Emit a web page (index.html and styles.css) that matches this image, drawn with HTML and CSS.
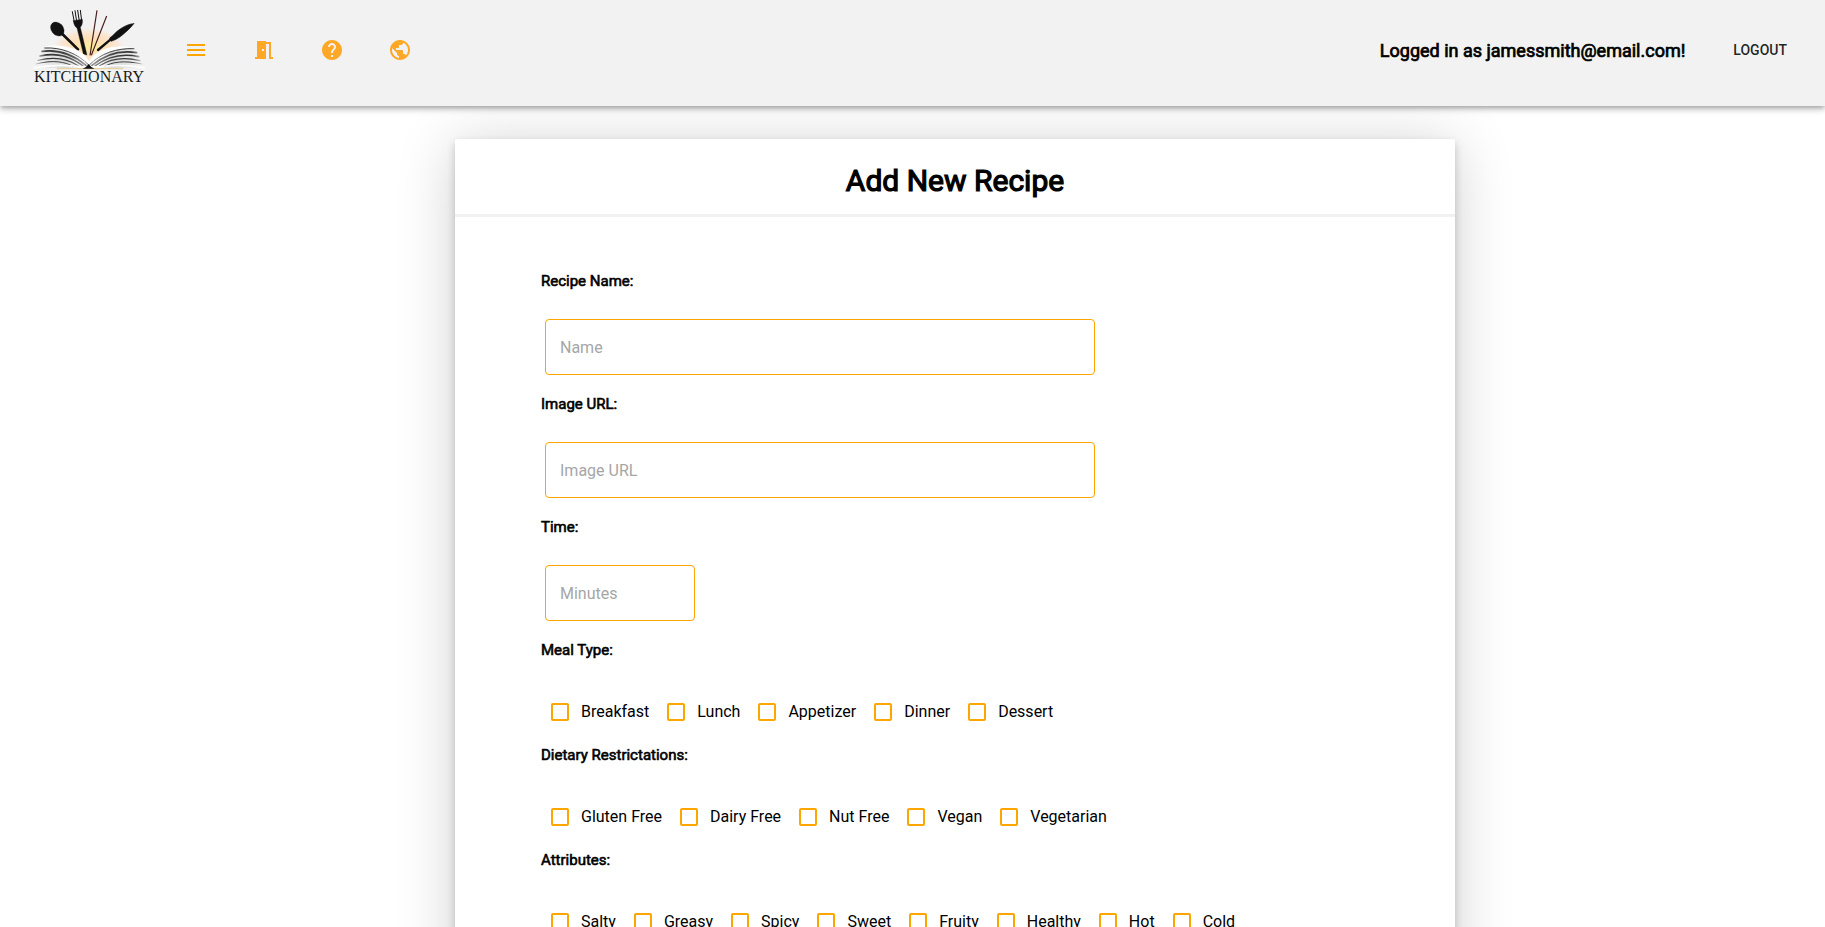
FILE: index.html
```html
<!DOCTYPE html>
<html lang="en">
<head>
<meta charset="utf-8">
<meta name="viewport" content="width=device-width, initial-scale=1">
<title>Kitchionary - Add New Recipe</title>
<link rel="stylesheet" href="styles.css">
</head>
<body>
<header class="topbar">
  <a class="logo" href="#" aria-label="Kitchionary home">
    <svg viewBox="0 0 420 300" width="140" height="100">
      <defs>
        <radialGradient id="glow">
          <stop offset="0" stop-color="#ffee9a"/>
          <stop offset="0.45" stop-color="#fde0b8"/>
          <stop offset="0.75" stop-color="#fbe3cd" stop-opacity="0.8"/>
          <stop offset="1" stop-color="#f3f3f3" stop-opacity="0"/>
        </radialGradient>
        <linearGradient id="page" x1="40" x2="374" y1="0" y2="0" gradientUnits="userSpaceOnUse"><stop offset="0" stop-color="#fff" stop-opacity="0"/><stop offset="0.12" stop-color="#e8e8e8"/><stop offset="0.3" stop-color="#d8d8d8"/><stop offset="0.42" stop-color="#fff"/><stop offset="0.58" stop-color="#fff"/><stop offset="0.7" stop-color="#d8d8d8"/><stop offset="0.88" stop-color="#e8e8e8"/><stop offset="1" stop-color="#fff" stop-opacity="0"/></linearGradient>
        <linearGradient id="ink" x1="40" x2="374" y1="0" y2="0" gradientUnits="userSpaceOnUse"><stop offset="0" stop-color="#333" stop-opacity="0"/><stop offset="0.12" stop-color="#333"/><stop offset="0.3" stop-color="#444"/><stop offset="0.46" stop-color="#999"/><stop offset="0.5" stop-color="#444"/><stop offset="0.54" stop-color="#999"/><stop offset="0.7" stop-color="#444"/><stop offset="0.88" stop-color="#333"/><stop offset="1" stop-color="#333" stop-opacity="0"/></linearGradient>
        <filter id="soft" x="-5%" y="-20%" width="110%" height="140%"><feGaussianBlur stdDeviation="1.2"/></filter>
      </defs>
      <ellipse cx="206" cy="140" rx="114" ry="60" fill="url(#glow)"/>
      <g fill="#111" stroke="#111" stroke-linecap="round">
        <ellipse cx="112" cy="87" rx="18" ry="23" transform="rotate(-42 112 87)"/>
        <path d="M127 102 L174 148" stroke-width="8" fill="none"/>
        <path d="M157 35 L163 66 M165 32 L170 64 M173 31 L178 64 M181 31 L185 62" stroke-width="3" fill="none"/>
        <path d="M160 62 L187 58 C189 70 185 78 181 82 L201 165 L190 162 L171 84 C165 80 161 73 160 62Z"/>
        <path d="M341 71 C322 71 294 88 277 108 L269 114 L273 124 L283 120 C292 118 324 94 341 71Z" stroke-width="2"/>
        <path d="M272 118 L234 150" stroke-width="7" fill="none"/>
      </g>
      <path d="M231 31 L210 166 M260 48 L214 166" stroke="#4a1d1d" stroke-width="3.5" fill="none"/>
      <path d="M72 140 C120 136 180 146 207 190 C234 146 290 136 342 144 L374 204 H40Z" fill="url(#page)"/>
      <path d="M76 138 C128 132 186 142 207 184 C230 142 290 134 340 143 C286 144 232 160 207 196 C186 158 128 146 76 144Z" fill="#fff"/>
      <g fill="none" stroke="url(#ink)" stroke-linecap="round" filter="url(#soft)">
        <path d="M74 144 C124 141 172 160 205 194 M342 146 C290 144 242 160 209 194" stroke-width="3"/>
        <path d="M66 154 C120 147 160 164 198 196 M350 158 C296 149 254 164 216 196" stroke-width="5"/>
        <path d="M60 168 C118 156 154 172 188 197 M356 170 C302 158 260 172 226 197" stroke-width="5"/>
        <path d="M54 181 C110 167 146 178 176 198 M360 182 C306 169 268 178 238 198" stroke-width="4"/>
        <path d="M48 192 C100 178 136 186 160 199 M366 192 C312 180 276 186 254 199" stroke-width="3"/>
      </g>
      <path d="M40 204 C100 192 160 196 204 203 M374 204 C312 192 258 196 212 203" stroke="#fff" stroke-width="5" fill="none"/>
      <path d="M110 206 H310" stroke="#e2b85c" stroke-width="2"/>
      <path d="M188 206 Q199 203 206 192 Q213 203 224 206Z" fill="#111"/>
      <text class="logo-name" x="207" y="245" text-anchor="middle">KITCHIONARY</text>
    </svg>
  </a>
  <nav class="nav" aria-label="Main">
    <button class="icon-button menu" type="button" aria-label="Menu"><svg viewBox="0 0 24 24"><path d="M3 18h18v-2H3v2zm0-5h18v-2H3v2zm0-7v2h18V6H3z"/></svg></button>
    <button class="icon-button" type="button" aria-label="Rooms"><svg viewBox="0 0 24 24"><path d="M14 6v15H3v-2h2V3h9v1h5v15h2v2h-4V6h-3zm-4 5v2h2v-2h-2z"/></svg></button>
    <button class="icon-button" type="button" aria-label="Help"><svg viewBox="0 0 24 24"><path d="M12 2C6.480 2 2 6.480 2 12s4.480 10 10 10 10-4.480 10-10S17.520 2 12 2zm1 17h-2v-2h2v2zm2.070-7.750l-.9.920C13.450 12.900 13 13.500 13 15h-2v-.5c0-1.100.450-2.100 1.170-2.830l1.240-1.260c.370-.360.590-.860.590-1.410 0-1.100-.9-2-2-2s-2 .9-2 2H8c0-2.210 1.790-4 4-4s4 1.790 4 4c0 .880-.360 1.680-.930 2.250z"/></svg></button>
    <button class="icon-button" type="button" aria-label="Public recipes"><svg viewBox="0 0 24 24"><path d="M12 2C6.480 2 2 6.480 2 12s4.480 10 10 10 10-4.480 10-10S17.520 2 12 2zm-1 17.930c-3.950-.490-7-3.850-7-7.930 0-.620.080-1.210.210-1.790L9 15v1c0 1.100.9 2 2 2v1.930zm6.900-2.540c-.260-.810-1-1.390-1.900-1.390h-1v-3c0-.550-.450-1-1-1H8v-2h2c.550 0 1-.450 1-1V7h2c1.100 0 2-.9 2-2v-.410c2.930 1.190 5 4.060 5 7.410 0 2.080-.8 3.970-2.100 5.390z"/></svg></button>
  </nav>
  <p class="session">Logged in as jamessmith@email.com!</p>
  <button class="logout" type="button">LOGOUT</button>
</header>

<main class="page">
  <section class="card">
    <h1 class="card-title">Add New Recipe</h1>
    <form class="form">
      <div class="field">
        <label class="field-label" for="name">Recipe Name:</label>
        <input class="text-input" id="name" type="text" placeholder="Name">
      </div>
      <div class="field">
        <label class="field-label" for="image">Image URL:</label>
        <input class="text-input" id="image" type="text" placeholder="Image URL">
      </div>
      <div class="field">
        <label class="field-label" for="time">Time:</label>
        <input class="text-input short" id="time" type="text" placeholder="Minutes">
      </div>
      <fieldset class="group">
        <legend class="field-label">Meal Type:</legend>
        <div class="options">
          <label class="option"><input type="checkbox">Breakfast</label>
          <label class="option"><input type="checkbox">Lunch</label>
          <label class="option"><input type="checkbox">Appetizer</label>
          <label class="option"><input type="checkbox">Dinner</label>
          <label class="option"><input type="checkbox">Dessert</label>
        </div>
      </fieldset>
      <fieldset class="group">
        <legend class="field-label">Dietary Restrictations:</legend>
        <div class="options">
          <label class="option"><input type="checkbox">Gluten Free</label>
          <label class="option"><input type="checkbox">Dairy Free</label>
          <label class="option"><input type="checkbox">Nut Free</label>
          <label class="option"><input type="checkbox">Vegan</label>
          <label class="option"><input type="checkbox">Vegetarian</label>
        </div>
      </fieldset>
      <fieldset class="group">
        <legend class="field-label">Attributes:</legend>
        <div class="options">
          <label class="option"><input type="checkbox">Salty</label>
          <label class="option"><input type="checkbox">Greasy</label>
          <label class="option"><input type="checkbox">Spicy</label>
          <label class="option"><input type="checkbox">Sweet</label>
          <label class="option"><input type="checkbox">Fruity</label>
          <label class="option"><input type="checkbox">Healthy</label>
          <label class="option"><input type="checkbox">Hot</label>
          <label class="option"><input type="checkbox">Cold</label>
        </div>
      </fieldset>
    </form>
  </section>
</main>
</body>
</html>
```

FILE: styles.css
```css
* { box-sizing: border-box; }

body {
  margin: 0;
  background: #fff;
  color: #000;
  font: 400 16px/24px Roboto, sans-serif;
}

button { border: 0; background: none; font: inherit; cursor: pointer; }

.topbar {
  position: relative;
  z-index: 1;
  display: flex;
  align-items: flex-start;
  padding: 0 24px 6px 20px;
  background: #f2f2f2;
  box-shadow: 0 2px 4px -1px rgba(0, 0, 0, 0.2), 0 4px 5px rgba(0, 0, 0, 0.14), 0 1px 10px rgba(0, 0, 0, 0.12);
}

.logo, .logo svg { display: block; }
.logo-name { font: 48px "Liberation Serif", serif; fill: #1a1a1a; }

.nav { display: flex; gap: 20px; padding: 26px 0 0 12px; }
.icon-button { width: 48px; height: 48px; padding: 12px; color: #ffa726; }
.icon-button.menu { color: #ffa500; }
.icon-button svg { display: block; width: 24px; height: 24px; fill: currentColor; }

.session {
  margin: 39px 40px 0 auto;
  font-size: 18px;
  -webkit-text-stroke: 0.04em currentColor;
}

.logout {
  margin-top: 32px;
  padding: 6px 14px 6px 8px;
  color: rgba(0, 0, 0, 0.87);
  font-size: 14px;
  font-weight: 500;
}

.page {
  display: grid;
  grid-template-columns: minmax(0, 455fr) minmax(0, 1000px) minmax(0, 370fr);
  padding: 33px 0;
}

.card {
  grid-column: 2;
  border-radius: 2px;
  background: #fff;
  box-shadow: 0 4px 8px rgba(0, 0, 0, 0.2), 0 6px 60px rgba(0, 0, 0, 0.19);
}

.card-title {
  margin: 0;
  padding: 24px 0 15px;
  border-bottom: 3px solid #f1f1f1;
  font-size: 30px;
  font-weight: 400;
  line-height: 36px;
  text-align: center;
  -webkit-text-stroke: 0.04em currentColor;
}

.form { padding: 52px 86px; }

.field { padding-bottom: 17px; }

.field-label {
  display: block;
  padding: 0;
  font-size: 15px;
  line-height: 24px;
  -webkit-text-stroke: 0.04em currentColor;
}

.text-input {
  display: block;
  width: 100%;
  max-width: 550px;
  height: 56px;
  margin: 26px 4px 0;
  padding: 0 14px;
  border: 1px solid #ffa500;
  border-radius: 4px;
  background: #fff;
  font: inherit;
}
.text-input.short { max-width: 150px; }
.text-input::placeholder { color: #a6a6a6; opacity: 1; }

.group { min-width: 0; margin: 0; padding: 0; border: 0; }

.options {
  display: flex;
  flex-wrap: wrap;
  gap: 18px;
  padding: 38px 10px 19px;
}

.option { display: flex; align-items: center; gap: 12px; }

.option input {
  appearance: none;
  width: 18px;
  height: 18px;
  margin: 0;
  border: 2px solid #ffa500;
  border-radius: 2px;
}
.option input:checked { background: #ffa500; }
```
